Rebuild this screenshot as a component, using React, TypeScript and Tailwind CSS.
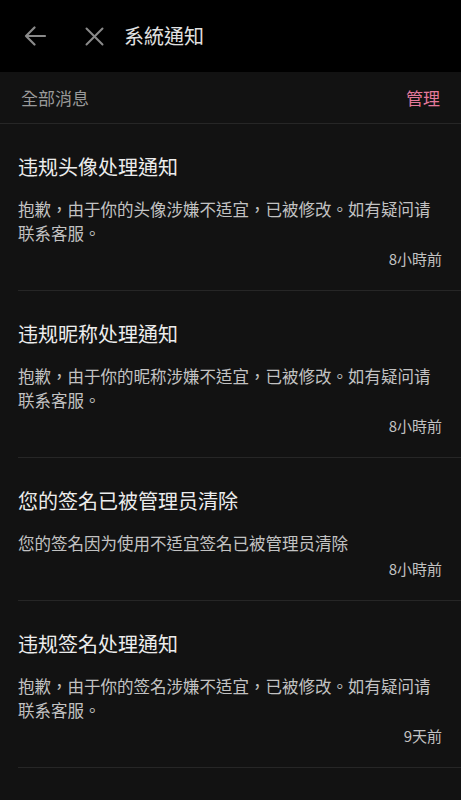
const items = [
  {
    title: "违规头像处理通知",
    body: "抱歉，由于你的头像涉嫌不适宜，已被修改。如有疑问请联系客服。",
    time: "8小時前",
  },
  {
    title: "违规昵称处理通知",
    body: "抱歉，由于你的昵称涉嫌不适宜，已被修改。如有疑问请联系客服。",
    time: "8小時前",
  },
  {
    title: "您的签名已被管理员清除",
    body: "您的签名因为使用不适宜签名已被管理员清除",
    time: "8小時前",
  },
  {
    title: "违规签名处理通知",
    body: "抱歉，由于你的签名涉嫌不适宜，已被修改。如有疑问请联系客服。",
    time: "9天前",
  },
];

export default function App() {
  return (
    <div
      className="w-[461px] h-[800px] overflow-hidden bg-[#121212]"
      style={{ fontFamily: '"Noto Sans CJK TC", "Noto Sans", sans-serif' }}
    >
      {/* top bar */}
      <div className="h-[72px] bg-black flex items-center">
        <svg className="ml-[24px] w-[23px] h-[20px]" viewBox="0 0 23 20" fill="none" stroke="#8a8a8a" strokeWidth={2.2} strokeLinecap="round" strokeLinejoin="round">
          <path d="M2 10H21M10.5 1.5L2 10l8.5 8.5" />
        </svg>
        <svg className="ml-[38px] w-[19px] h-[19px]" viewBox="0 0 19 19" fill="none" stroke="#8a8a8a" strokeWidth={2} strokeLinecap="round">
          <path d="M1.5 1.5l16 16M17.5 1.5l-16 16" />
        </svg>
        <span className="ml-[20px] text-[20px] leading-none text-[#e2e2e2]">系統通知</span>
      </div>

      {/* filter row */}
      <div className="h-[52px] flex items-center justify-between px-[21px] border-b border-[#262626]">
        <span className="text-[17px] text-[#9a9a9a]">全部消息</span>
        <span className="text-[17px] text-[#e3799b]">管理</span>
      </div>

      {/* list */}
      <div>
        {items.map((it) => (
          <div key={it.title} className="ml-[18px] pr-[19px] pt-[29px] pb-[21px] border-b border-[#262626]">
            <div className="text-[20px] leading-[28px] text-[#ececec]">{it.title}</div>
            <div className="mt-[16px] text-[16.5px] leading-[24px] text-[#c2c2c2]">{it.body}</div>
            <div className="mt-[4px] text-right text-[15px] leading-[20px] text-[#c2c2c2]">{it.time}</div>
          </div>
        ))}
      </div>
    </div>
  );
}
